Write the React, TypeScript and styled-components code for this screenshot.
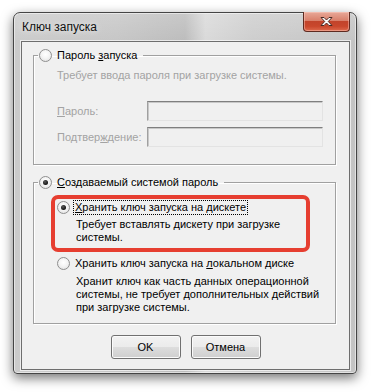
import React from 'react';
import styled, { createGlobalStyle, css } from 'styled-components';

const GlobalStyle = createGlobalStyle`
  html, body { margin: 0; padding: 0; background: #ffffff; }
  body { font-family: "Liberation Sans", Arial, sans-serif; }
`;

const Page = styled.div`
  width: 374px;
  height: 392px;
  box-sizing: border-box;
  padding: 12px 0 0 13px;
  background: #ffffff;
`;

const Window = styled.div`
  width: 344px;
  height: 362px;
  box-sizing: border-box;
  display: flex;
  flex-direction: column;
  padding: 0 6px 3px 7px;
  border: 1px solid #454545;
  border-radius: 7px 7px 4px 4px;
  background:
    linear-gradient(to bottom, rgba(255,255,255,0.18), rgba(255,255,255,0) 30px),
    linear-gradient(to right, #cbcbcb 0%, #c6c6c6 30%, #bcbcbc 50%, #d9d9d9 56%, #cdcdcd 70%, #c4c4c4 100%);
  box-shadow: 0 4px 12px rgba(0, 0, 0, 0.55), inset 0 0 0 1px rgba(255, 255, 255, 0.5);
`;

const TitleBar = styled.div`
  height: 28px;
  flex: none;
  display: flex;
  justify-content: space-between;
  align-items: flex-start;
`;

const Title = styled.div`
  font-family: "Liberation Sans", Arial, sans-serif;
  font-size: 12px;
  line-height: 28px;
  color: #111;
  padding-left: 1px;
  text-shadow: 0 0 6px rgba(255, 255, 255, 0.9);
`;

const CloseButton = styled.div`
  width: 47px;
  height: 20px;
  margin-top: -1px;
  box-sizing: border-box;
  border: 1px solid #5e2a20;
  border-top: none;
  border-radius: 0 0 4px 4px;
  display: flex;
  align-items: center;
  justify-content: center;
  background: linear-gradient(to bottom, #e8a999 0%, #d9806b 45%, #c2442b 50%, #c9472c 75%, #de6a4d 100%);
  box-shadow: inset 0 0 0 1px rgba(255, 210, 200, 0.45);
`;

const Client = styled.div`
  flex: 1;
  box-sizing: border-box;
  border: 1px solid #6e6e6e;
  box-shadow: 0 0 0 1px rgba(255, 255, 255, 0.65);
  background: #f0f0f0;
  padding: 7px 13px 0 11px;
  display: flex;
  flex-direction: column;
  font-size: 11px;
  line-height: 13px;
  color: #000;
`;

const Group = styled.fieldset<{ $gap?: number }>`
  margin: ${p => p.$gap ?? 0}px 0 0 0;
  padding: 0;
  border: 1px solid #a0a0a0;
  box-shadow: 1px 1px 0 #ffffff, inset 1px 1px 0 #ffffff;
  min-width: 0;
`;

const GroupBody = styled.div<{ $bottom: number }>`
  padding: 0 0 ${p => p.$bottom}px 23px;
`;

const Legend = styled.legend`
  margin-left: 4px;
  padding: 0 5px 0 1px;
  display: flex;
  align-items: center;
  height: 13px;
`;

const Radio = styled.span<{ $checked?: boolean }>`
  position: relative;
  width: 13px;
  height: 13px;
  box-sizing: border-box;
  flex: none;
  border-radius: 50%;
  border: 1px solid #8f8f8f;
  background: radial-gradient(circle at 50% 40%, #ffffff 0%, #f4f4f4 45%, #dcdcdc 100%);
  margin-right: 5px;
  ${p =>
    p.$checked &&
    css`
      &::after {
        content: '';
        position: absolute;
        left: 3px;
        top: 3px;
        width: 5px;
        height: 5px;
        border-radius: 50%;
        background: radial-gradient(circle at 40% 35%, #5a5a5a 0%, #111111 70%);
      }
    `}
`;

const Label = styled.span<{ $focused?: boolean }>`
  white-space: nowrap;
  padding: 0 1px;
  margin-left: -1px;
  ${p =>
    p.$focused &&
    css`
      outline: 1px dotted #000;
      outline-offset: 0;
    `}
`;

const Key = styled.span`
  text-decoration: underline;
  text-underline-offset: 1px;
`;

const Hint = styled.div<{ $disabled?: boolean; $indent?: number; $top: number }>`
  color: ${p => (p.$disabled ? '#a3a3a3' : '#000')};
  margin: ${p => p.$top}px 0 0 ${p => p.$indent ?? 0}px;
  white-space: nowrap;
`;

const Fields = styled.div`
  display: grid;
  grid-template-columns: 90px 176px;
  row-gap: 6px;
  margin-top: 19px;
  align-items: center;
`;

const FieldLabel = styled.label`
  color: #a3a3a3;
  white-space: nowrap;
`;

const Input = styled.div`
  height: 20px;
  box-sizing: border-box;
  border-top: 1px solid #7f7f7f;
  border-left: 1px solid #a0a0a0;
  border-right: 1px solid #e3e3e3;
  border-bottom: 1px solid #e3e3e3;
  box-shadow: inset 1px 1px 0 #c8c8c8;
  background: #f0f0f0;
`;

const Option = styled.div<{ $highlight?: boolean; $top: number }>`
  position: relative;
  margin-top: ${p => p.$top}px;
  ${p =>
    p.$highlight &&
    css`
      &::before {
        content: '';
        position: absolute;
        left: -6px;
        top: -6px;
        right: 25px;
        bottom: -8px;
        border: 4px solid #e63e30;
        border-radius: 7px;
        pointer-events: none;
      }
    `}
`;

const OptionRow = styled.div`
  display: flex;
  align-items: center;
  height: 13px;
`;

const Buttons = styled.div`
  display: flex;
  justify-content: center;
  gap: 10px;
  margin-top: 11px;
  padding-left: 2px;
`;

const Button = styled.div`
  width: 70px;
  height: 24px;
  box-sizing: border-box;
  border: 1px solid #707070;
  border-radius: 3px;
  display: flex;
  align-items: center;
  justify-content: center;
  font-size: 11px;
  color: #000;
  background: linear-gradient(to bottom, #f2f2f2 0%, #ebebeb 50%, #dddddd 51%, #cfcfcf 100%);
  box-shadow: inset 0 0 0 1px #fbfbfb;
`;

export default function App() {
  return (
    <>
      <GlobalStyle />
      <Page>
        <Window>
          <TitleBar>
            <Title>Ключ запуска</Title>
            <CloseButton>
              <svg width="13" height="11" viewBox="0 0 13 11">
                <path
                  d="M1 1.5 L4 1.5 L6.5 4 L9 1.5 L12 1.5 L8.3 5.5 L12 9.5 L9 9.5 L6.5 7 L4 9.5 L1 9.5 L4.7 5.5 Z"
                  fill="#ffffff"
                  stroke="#4a2a24"
                  strokeWidth="1"
                  strokeLinejoin="round"
                />
              </svg>
            </CloseButton>
          </TitleBar>
          <Client>
            <Group>
              <Legend>
                <Radio />
                <Label>
                  Пароль <Key>з</Key>апуска
                </Label>
              </Legend>
              <GroupBody $bottom={17}>
                <Hint $disabled $top={7}>
                  Требует ввода пароля при загрузке системы.
                </Hint>
                <Fields>
                  <FieldLabel>
                    <Key>П</Key>ароль:
                  </FieldLabel>
                  <Input />
                  <FieldLabel>
                    Подтвер<Key>ж</Key>дение:
                  </FieldLabel>
                  <Input />
                </Fields>
              </GroupBody>
            </Group>
            <Group $gap={11}>
              <Legend>
                <Radio $checked />
                <Label>
                  <Key>С</Key>оздаваемый системой пароль
                </Label>
              </Legend>
              <GroupBody $bottom={9}>
                <Option $highlight $top={12}>
                  <OptionRow>
                    <Radio $checked />
                    <Label $focused>
                      <Key>Х</Key>ранить ключ запуска на дискете
                    </Label>
                  </OptionRow>
                  <Hint $top={4} $indent={19}>
                    Требует вставлять дискету при загрузке
                    <br />
                    системы.
                  </Hint>
                </Option>
                <Option $top={13}>
                  <OptionRow>
                    <Radio />
                    <Label>
                      Хранить ключ запуска на <Key>л</Key>окальном диске
                    </Label>
                  </OptionRow>
                  <Hint $top={5} $indent={19}>
                    Хранит ключ как часть данных операционной
                    <br />
                    системы, не требует дополнительных действий
                    <br />
                    при загрузке системы.
                  </Hint>
                </Option>
              </GroupBody>
            </Group>
            <Buttons>
              <Button>OK</Button>
              <Button>Отмена</Button>
            </Buttons>
          </Client>
        </Window>
      </Page>
    </>
  );
}
